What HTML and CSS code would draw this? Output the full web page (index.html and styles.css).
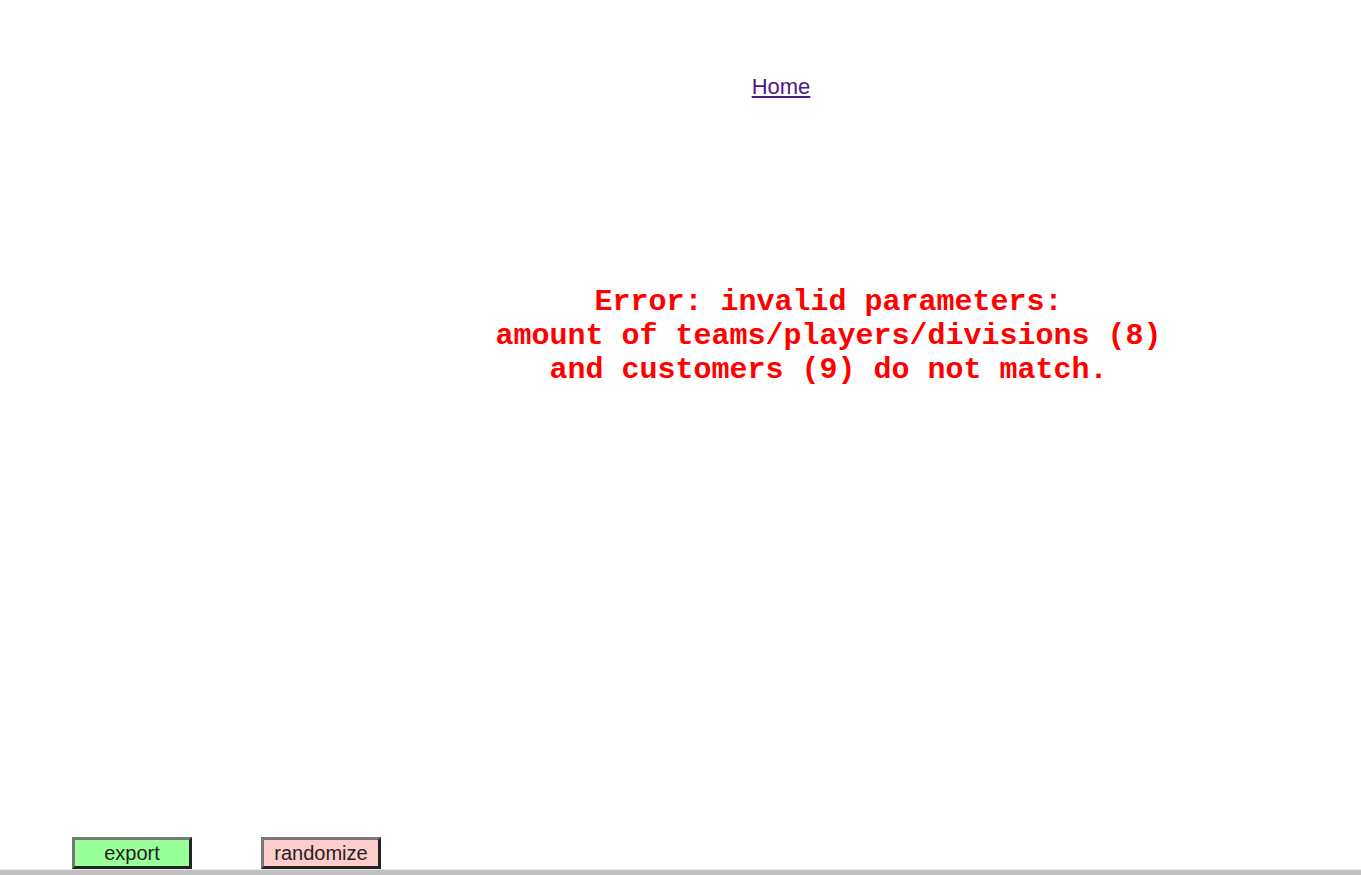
FILE: index.html
```html
<!DOCTYPE html>
<html>
<head>
<meta charset="utf-8">
<link rel="stylesheet" href="styles.css">
</head>
<body>
<div class="page">
  <div class="nav"><a class="home" href="#">Home</a></div>
  <div class="error">Error: invalid parameters:<br>amount of teams/players/divisions (8)<br>and customers (9) do not match.</div>
  <div class="spacer"></div>
  <div class="toolbar">
    <button class="btn btn-export">export</button>
    <button class="btn btn-random">randomize</button>
  </div>
  <div class="bottombar"></div>
</div>
</body>
</html>
```
FILE: styles.css
```css
html, body {
  margin: 0;
  padding: 0;
  background: #fff;
}
.page {
  height: 875px;
  display: flex;
  flex-direction: column;
}
.nav {
  padding: 74px 0 0 201px;
  text-align: center;
  height: 30px;
}
.home {
  font-family: "Liberation Sans", Arial, sans-serif;
  font-size: 22px;
  color: #4b1a84;
  text-decoration: underline;
}
.error {
  margin-top: 181px;
  padding-left: 296px;
  text-align: center;
  font-family: "Liberation Mono", "Courier New", monospace;
  font-weight: bold;
  font-size: 30px;
  line-height: 34px;
  color: #ff0000;
}
.spacer {
  flex: 1;
}
.toolbar {
  display: flex;
  gap: 69px;
  padding-left: 72px;
  height: 32px;
}
.btn {
  box-sizing: border-box;
  width: 120px;
  height: 32px;
  margin: 0;
  padding: 0;
  font-family: "Liberation Sans", Arial, sans-serif;
  font-size: 20px;
  color: #222;
  border-style: solid;
  border-width: 3px;
  border-color: #777 #222 #222 #777;
}
.btn-export {
  background: #99ff99;
}
.btn-random {
  background: #ffcccc;
}
.bottombar {
  height: 5px;
  border-top: 1px solid #e8e8e8;
  background: #c0c0c0;
}
```
